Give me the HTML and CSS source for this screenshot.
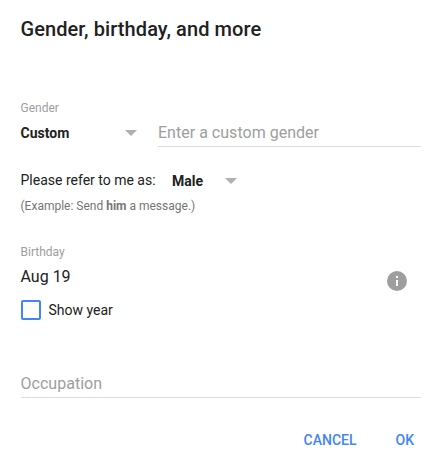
FILE: index.html
```
<!DOCTYPE html>
<html lang="en">
<head>
<meta charset="utf-8">
<title>Gender, birthday, and more</title>
<link rel="stylesheet" href="styles.css">
</head>
<body>
<main class="dialog">
  <h1 class="title">Gender, birthday, and more</h1>
  <div class="label">Gender</div>
  <div class="gender-row">
    <div class="select select-gender"><span>Custom</span><i class="arrow"></i></div>
    <div class="field">Enter a custom gender</div>
  </div>
  <div class="pronoun-row">
    <span class="refer">Please refer to me as:</span>
    <div class="select select-pronoun"><span>Male</span><i class="arrow"></i></div>
  </div>
  <p class="example">(Example: Send <b>him</b> a message.)</p>
  <div class="birthday">
    <div>
      <div class="label">Birthday</div>
      <div class="date">Aug 19</div>
    </div>
    <svg class="info" viewBox="0 0 20 20" width="20" height="20"><circle cx="10" cy="10" r="10" fill="#9e9e9e"/><path d="M9 5h2v2H9zM9 9h2v6H9z" fill="#fff"/></svg>
  </div>
  <div class="check-row"><span class="box"></span><span class="check-label">Show year</span></div>
  <div class="field occupation">Occupation</div>
  <div class="actions"><span class="cancel">CANCEL</span><span class="ok">OK</span></div>
</main>
</body>
</html>
```
FILE: styles.css
```
body {
  margin: 0;
  background: #fff;
  color: #212121;
  font: 14px/20px Roboto, sans-serif;
}
.dialog {
  box-sizing: border-box;
  width: 440px;
  height: 462px;
  padding: 17px 19px 0 20.5px;
  overflow: hidden;
  white-space: nowrap;
}
.title {
  margin: 0 0 59px;
  font-size: 20px;
  line-height: 24px;
  font-weight: 500;
  letter-spacing: 0.08px;
}
.label {
  font-size: 12px;
  line-height: 16px;
  color: #9e9e9e;
}
.gender-row {
  display: flex;
  align-items: flex-start;
  gap: 21px;
  margin-top: 4px;
}
.select {
  display: flex;
  justify-content: space-between;
  align-items: center;
  font-weight: 700;
}
.select-gender {
  width: 116.5px;
  padding-top: 3px;
}
.select-pronoun {
  width: 65px;
  padding-top: 1px;
}
.arrow {
  border: 6px solid transparent;
  border-top-color: #b0b0b0;
  border-bottom: 0;
}
.field {
  flex: 1;
  border-bottom: 1px solid #dcdcdc;
  font-size: 16px;
  line-height: 26px;
  letter-spacing: 0.02px;
  color: #9e9e9e;
}
.pronoun-row {
  display: flex;
  align-items: flex-start;
  gap: 16.5px;
  margin-top: 23px;
}
.example {
  margin: 7px 0 30px;
  font-size: 12px;
  line-height: 16px;
  color: #757575;
}
.birthday {
  display: flex;
  justify-content: space-between;
  align-items: flex-end;
  height: 47px;
  padding-right: 14px;
}
.date {
  margin: 7px 0 4px;
  font-size: 16px;
}
.check-row {
  display: flex;
  gap: 7.5px;
  margin-top: 9px;
}
.box {
  box-sizing: border-box;
  width: 20px;
  height: 20px;
  margin-left: 0.5px;
  border: 2px solid #4285f4;
  border-radius: 2px;
}
.occupation {
  margin-top: 51px;
}
.actions {
  display: flex;
  justify-content: flex-end;
  gap: 39px;
  margin-top: 32px;
  padding-right: 7px;
  font-weight: 500;
  color: #4285f4;
}
```
